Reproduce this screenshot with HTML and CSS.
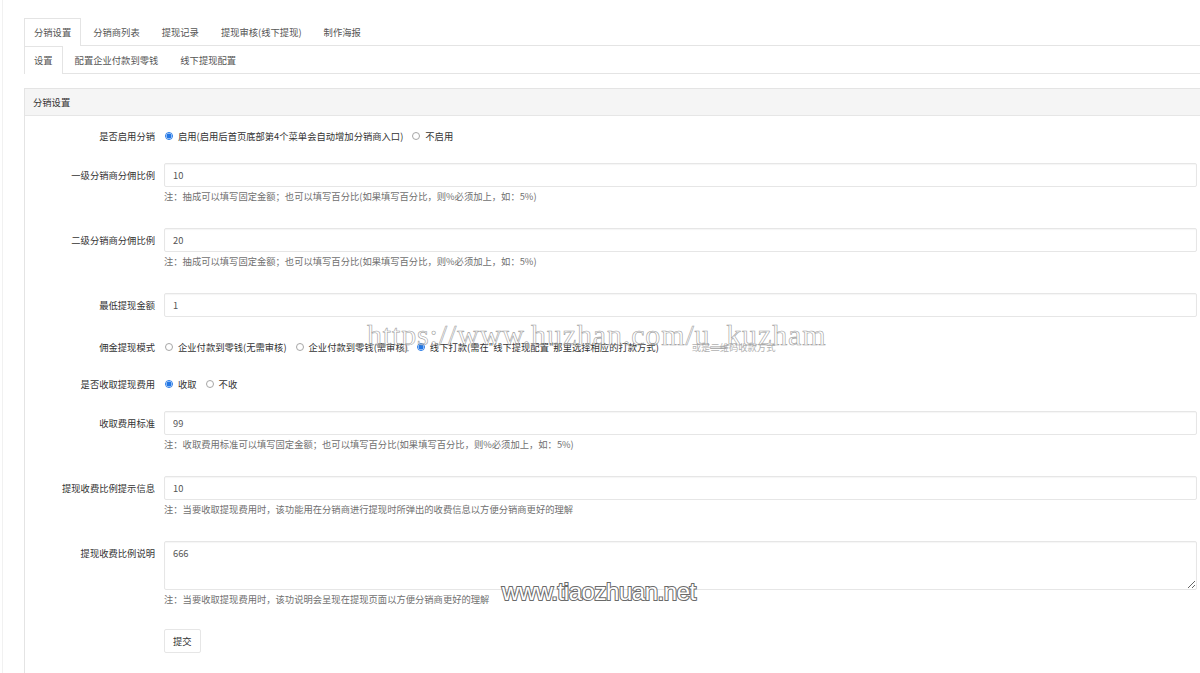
FILE: index.html
```html
<!DOCTYPE html>
<html lang="zh-CN">
<head>
<meta charset="utf-8">
<title>分销设置</title>
<link rel="stylesheet" href="styles.css">
</head>
<body>
<div class="page">
  <ul class="tabs">
    <li class="tab active">分销设置</li>
    <li class="tab">分销商列表</li>
    <li class="tab">提现记录</li>
    <li class="tab">提现审核(线下提现)</li>
    <li class="tab">制作海报</li>
  </ul>
  <ul class="tabs">
    <li class="tab active">设置</li>
    <li class="tab">配置企业付款到零钱</li>
    <li class="tab">线下提现配置</li>
  </ul>

  <div class="panel">
    <div class="panel-head">分销设置</div>
    <form class="panel-body">
      <div class="group radio-group">
        <div class="label">是否启用分销</div>
        <div class="radios">
          <span class="radio"><i class="dot on"></i>启用(启用后首页底部第4个菜单会自动增加分销商入口)</span>
          <span class="radio"><i class="dot"></i>不启用</span>
        </div>
      </div>

      <div class="group">
        <div class="label">一级分销商分佣比例</div>
        <div class="control">
          <input class="input" type="text" value="10">
          <p class="hint">注：抽成可以填写固定金额；也可以填写百分比(如果填写百分比，则%必须加上，如：5%)</p>
        </div>
      </div>

      <div class="group">
        <div class="label">二级分销商分佣比例</div>
        <div class="control">
          <input class="input" type="text" value="20">
          <p class="hint">注：抽成可以填写固定金额；也可以填写百分比(如果填写百分比，则%必须加上，如：5%)</p>
        </div>
      </div>

      <div class="group group-wide">
        <div class="label">最低提现金额</div>
        <div class="control">
          <input class="input" type="text" value="1">
        </div>
      </div>

      <div class="group radio-group">
        <div class="label">佣金提现模式</div>
        <div class="radios">
          <span class="radio"><i class="dot"></i>企业付款到零钱(无需审核)</span>
          <span class="radio"><i class="dot"></i>企业付款到零钱(需审核)</span>
          <span class="radio"><i class="dot on"></i>线下打款(需在"线下提现配置"那里选择相应的打款方式)</span>
          <span class="faded">或是二维码收款方式</span>
        </div>
      </div>

      <div class="group radio-group">
        <div class="label">是否收取提现费用</div>
        <div class="radios">
          <span class="radio"><i class="dot on"></i>收取</span>
          <span class="radio"><i class="dot"></i>不收</span>
        </div>
      </div>

      <div class="group">
        <div class="label">收取费用标准</div>
        <div class="control">
          <input class="input" type="text" value="99">
          <p class="hint">注：收取费用标准可以填写固定金额；也可以填写百分比(如果填写百分比，则%必须加上，如：5%)</p>
        </div>
      </div>

      <div class="group">
        <div class="label">提现收费比例提示信息</div>
        <div class="control">
          <input class="input" type="text" value="10">
          <p class="hint">注：当要收取提现费用时，该功能用在分销商进行提现时所弹出的收费信息以方便分销商更好的理解</p>
        </div>
      </div>

      <div class="group">
        <div class="label">提现收费比例说明</div>
        <div class="control">
          <textarea class="textarea">666</textarea>
          <p class="hint hint-last">注：当要收取提现费用时，该功说明会呈现在提现页面以方便分销商更好的理解</p>
        </div>
      </div>

      <div class="group">
        <div class="label"></div>
        <div class="control">
          <button class="btn" type="button">提交</button>
        </div>
      </div>
    </form>
  </div>
</div>

<div class="wm wm-huzhan">https://www.huzhan.com/u_kuzham</div>
<div class="wm wm-tiao">www.tiaozhuan.net</div>
</body>
</html>
```

FILE: styles.css
```css
* { box-sizing: border-box; }

html, body {
  margin: 0;
  padding: 0;
  background: #fff;
}

body {
  position: relative;
  height: 673px;
  overflow: hidden;
  font-family: "Noto Sans CJK SC", "Noto Sans", sans-serif;
  font-size: 9.3px;
  color: #333;
}

.page {
  margin-left: 2px;
  border-left: 1px solid #f1f1f1;
  padding: 18px 0 0 21px;
  min-height: 673px;
}

/* tabs */
.tabs {
  display: flex;
  list-style: none;
  margin: 0;
  padding: 0;
  height: 28px;
  border-bottom: 1px solid #e4e4e4;
}

.tab {
  height: 28px;
  line-height: 26px;
  padding: 0 9px;
  margin-right: 2px;
  margin-bottom: -1px;
  border: 1px solid transparent;
  border-bottom: 0;
  color: #555;
  white-space: nowrap;
}

.tab.active {
  background: #fff;
  border-color: #e4e4e4;
}

/* panel */
.panel {
  margin-top: 14px;
  border: 1px solid #e4e4e4;
  border-right: 0;
  min-height: 620px;
}

.panel-head {
  height: 27px;
  line-height: 26px;
  padding-left: 8px;
  background: #f5f5f5;
  border-bottom: 1px solid #e6e6e6;
  color: #333;
}

.panel-body {
  margin: 0;
  padding: 10px 3px 30px 0;
}

.group {
  display: grid;
  grid-template-columns: 130px 1fr;
  column-gap: 9px;
  margin-bottom: 16px;
}

.group-wide { margin-bottom: 20px; }

.label {
  text-align: right;
  line-height: 24px;
  color: #333;
  white-space: nowrap;
}

.radio-group { margin-bottom: 17px; }
.radio-group .label { line-height: 20px; }

.radios {
  display: flex;
  align-items: center;
  height: 20px;
  padding-left: 1px;
  white-space: nowrap;
}

.radio {
  display: inline-flex;
  align-items: center;
  gap: 5px;
  margin-right: 9px;
  color: #333;
}

.dot {
  display: inline-block;
  width: 8px;
  height: 8px;
  border: 1px solid #a6a6a6;
  border-radius: 50%;
  background: #fff;
}

.dot.on {
  border-color: #2277e6;
  background: radial-gradient(circle, #2277e6 0 2.2px, #fff 2.8px);
}

.faded {
  margin-left: 24px;
  color: #b0b0b0;
}

.control { min-width: 0; }

.input {
  display: block;
  width: 100%;
  height: 24px;
  margin: 0;
  padding: 0 8px;
  border: 1px solid #e6e6e6;
  border-radius: 2px;
  box-shadow: inset 0 1px 1px rgba(0, 0, 0, 0.04);
  font-family: inherit;
  font-size: 9.3px;
  color: #555;
  outline: none;
}

.textarea {
  display: block;
  width: 100%;
  height: 49px;
  margin: 0;
  padding: 4px 8px;
  border: 1px solid #e6e6e6;
  border-radius: 2px;
  box-shadow: inset 0 1px 1px rgba(0, 0, 0, 0.04);
  font-family: inherit;
  font-size: 9.3px;
  line-height: 14px;
  color: #555;
  resize: vertical;
  outline: none;
}

.hint {
  margin: 3px 0 10px;
  line-height: 12px;
  color: #6f6f6f;
  white-space: nowrap;
}

.hint-last { margin-bottom: 8px; }

.btn {
  height: 24px;
  padding: 0 8px;
  border: 1px solid #e6e6e6;
  border-radius: 2px;
  background: #fff;
  font-family: inherit;
  font-size: 9.3px;
  color: #333;
}

/* watermarks */
.wm {
  position: absolute;
  white-space: nowrap;
  pointer-events: none;
}

.wm-huzhan {
  left: 367px;
  top: 318px;
  font-family: "Liberation Serif", serif;
  font-size: 30px;
  line-height: 34px;
  letter-spacing: 0.85px;
  color: transparent;
  -webkit-text-stroke: 0.6px #a0a0a0;
}

.wm-tiao {
  left: 502px;
  top: 578px;
  font-family: "Liberation Sans", Arial, sans-serif;
  font-size: 24px;
  line-height: 28px;
  letter-spacing: -0.45px;
  color: #fff;
  -webkit-text-stroke: 2px #6a6a6a;
  paint-order: stroke fill;
}
```
